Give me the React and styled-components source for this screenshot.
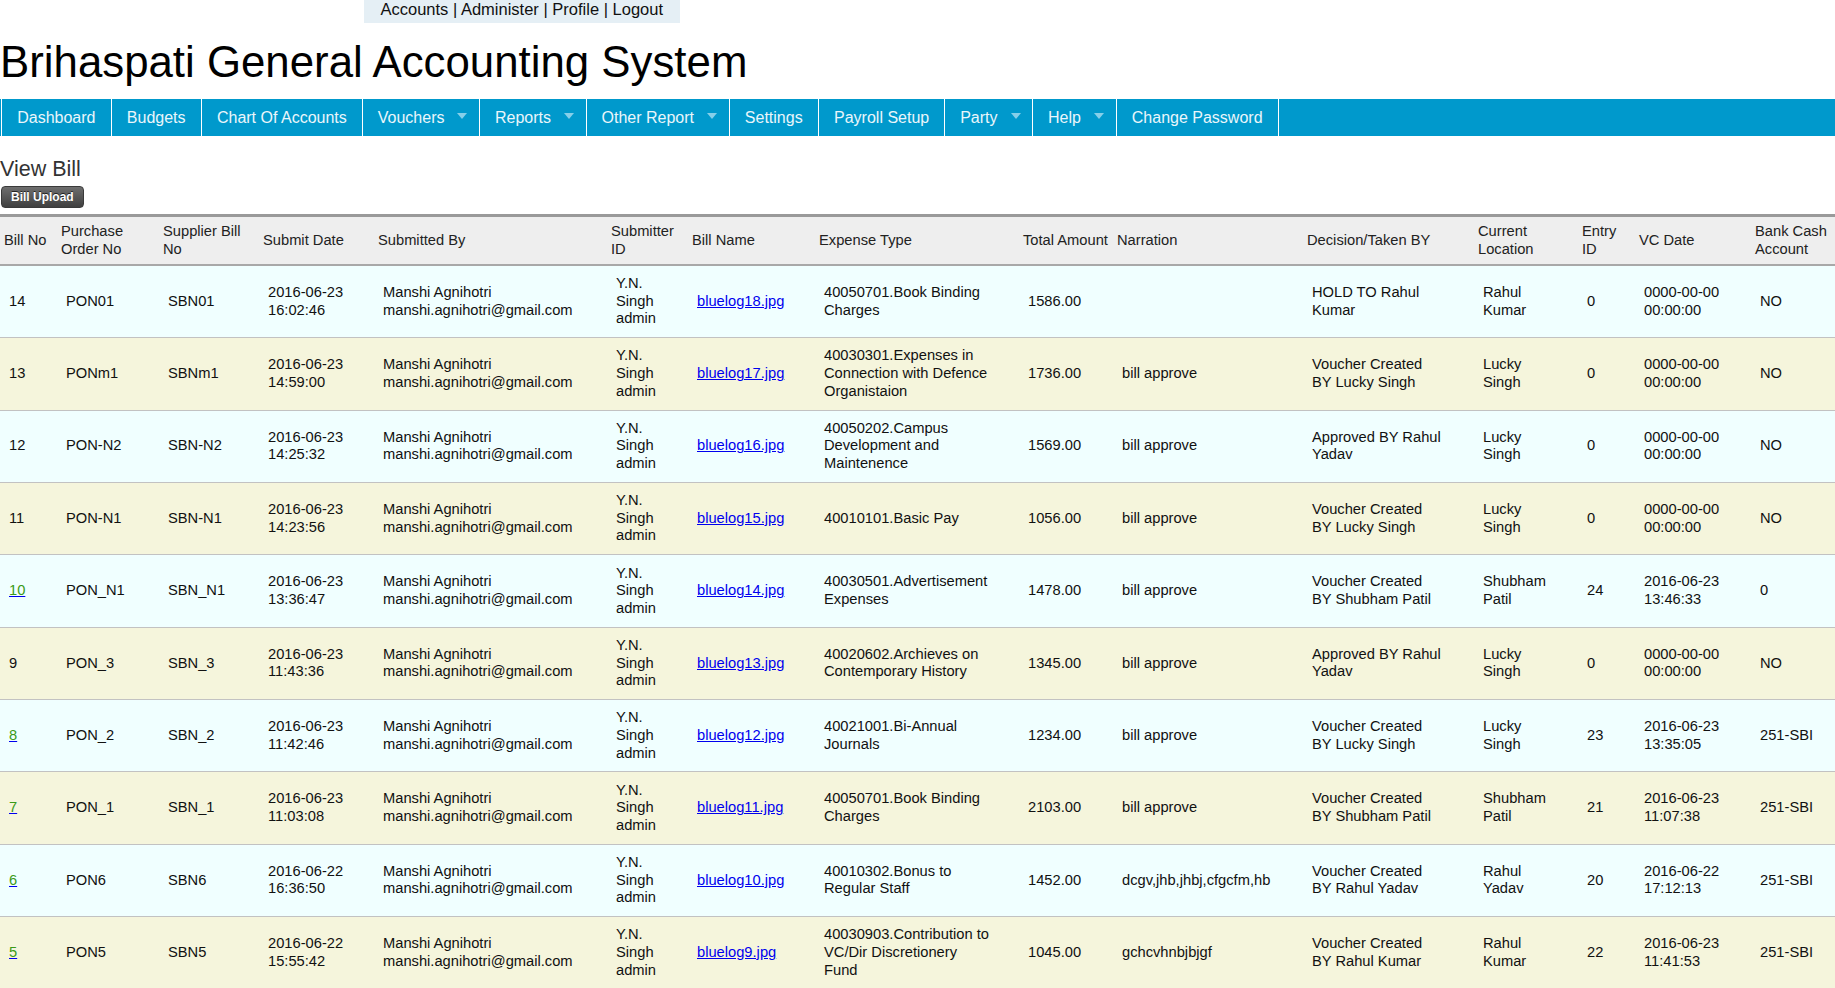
import React from "react";
import styled, { createGlobalStyle } from "styled-components";

const GlobalStyle = createGlobalStyle`
  html, body { margin: 0; padding: 0; background: #ffffff; }
  body {
    font-family: "Liberation Sans", Arial, Helvetica, sans-serif;
    color: #000;
    overflow: hidden;
  }
`;

const Page = styled.div`
  width: 1835px;
  overflow: hidden;
`;

const TopLinks = styled.div`
  margin-left: 364px;
  width: fit-content;
  background: #e5eff5;
  font-size: 16.5px;
  line-height: 19px;
  padding: 0 16.5px 4.4px;
  color: #111;
`;

const TopLink = styled.a`
  color: #111;
  text-decoration: none;
`;

const Title = styled.h1`
  margin: 13.2px 0 0;
  font-size: 43.8px;
  line-height: 50px;
  font-weight: normal;
  color: #000;
`;

const NavBar = styled.nav`
  margin-top: 12.3px;
  height: 37.5px;
  background: #0099cc;
  display: flex;
  padding-left: 1px;
`;

const NavItem = styled.div`
  display: flex;
  align-items: center;
  gap: 13px;
  height: 100%;
  padding: 0 ${(p) => (p.$dropdown ? "11.7px" : "15.2px")} 0 ${(p) => (p.$dropdown ? "14.8px" : "15.2px")};
  border-right: 1px solid #ffffff;
  border-left: ${(p) => (p.$first ? "1px solid #ffffff" : "none")};
  color: #eaf6fb;
  font-size: 16px;
  white-space: nowrap;
  cursor: pointer;
`;

const Arrow = styled.span`
  width: 0;
  height: 0;
  border-left: 5px solid transparent;
  border-right: 5px solid transparent;
  border-top: 6px solid #86cfe9;
  margin-top: -3px;
`;

const Heading = styled.h2`
  margin: 20.6px 0 0;
  font-size: 21.5px;
  line-height: 24px;
  font-weight: normal;
  color: #333;
`;

const UploadButton = styled.button`
  display: block;
  box-sizing: border-box;
  margin: 5.2px 0 0 1px;
  height: 22px;
  padding: 0 9px;
  border: 1px solid #3a3a3a;
  border-radius: 4px;
  background: linear-gradient(#6e6e6e, #3f3f3f);
  color: #fff;
  font-family: "Liberation Sans", Arial, sans-serif;
  font-weight: bold;
  font-size: 12px;
  text-shadow: 0 -1px 0 #222;
  cursor: pointer;
`;

const Table = styled.table`
  margin-top: 5.8px;
  border-collapse: separate;
  border-spacing: 0;
  table-layout: fixed;
  width: 1871px;
  font-size: 14.7px;
`;

const Th = styled.th`
  background: #eeeeee;
  border-top: 3px solid #9a9a9a;
  border-bottom: 2px solid #a8a8a8;
  padding: 6.4px 1px 5.6px 4px;
  line-height: 17.5px;
  text-align: left;
  vertical-align: middle;
  font-weight: normal;
  color: #222;
  white-space: nowrap;
`;

const Row = styled.tr`
  background: ${(p) => (p.$odd ? "#f0ffff" : "#f5f5dc")};
`;

const Td = styled.td`
  padding: 9.2px 10px 9.2px 9px;
  line-height: 17.65px;
  border-bottom: 1px solid #c2c2c2;
  vertical-align: middle;
  text-align: left;
  white-space: nowrap;
  color: #111;
`;

const BillLink = styled.a`
  color: #0000ee;
  text-decoration: underline;
`;

const NumLink = styled.a`
  color: #3a9a18;
  text-decoration: underline;
  text-decoration-color: #0000ee;
`;

const colWidths = [57, 102, 100, 115, 233, 81, 127, 204, 94, 190, 171, 104, 57, 116, 120];

const headers = [
  ["Bill No"],
  ["Purchase", "Order No"],
  ["Supplier Bill", "No"],
  ["Submit Date"],
  ["Submitted By"],
  ["Submitter", "ID"],
  ["Bill Name"],
  ["Expense Type"],
  ["Total Amount"],
  ["Narration"],
  ["Decision/Taken BY"],
  ["Current", "Location"],
  ["Entry", "ID"],
  ["VC Date"],
  ["Bank Cash", "Account"],
];

const rows = [
  { no: "14", link: false, po: "PON01", sb: "SBN01", date: ["2016-06-23", "16:02:46"], file: "bluelog18.jpg", exp: ["40050701.Book Binding", "Charges"], amt: "1586.00", nar: "", dec: ["HOLD TO Rahul", "Kumar"], loc: ["Rahul", "Kumar"], entry: "0", vc: ["0000-00-00", "00:00:00"], bank: "NO" },
  { no: "13", link: false, po: "PONm1", sb: "SBNm1", date: ["2016-06-23", "14:59:00"], file: "bluelog17.jpg", exp: ["40030301.Expenses in", "Connection with Defence", "Organistaion"], amt: "1736.00", nar: "bill approve", dec: ["Voucher Created", "BY Lucky Singh"], loc: ["Lucky", "Singh"], entry: "0", vc: ["0000-00-00", "00:00:00"], bank: "NO" },
  { no: "12", link: false, po: "PON-N2", sb: "SBN-N2", date: ["2016-06-23", "14:25:32"], file: "bluelog16.jpg", exp: ["40050202.Campus", "Development and", "Maintenence"], amt: "1569.00", nar: "bill approve", dec: ["Approved BY Rahul", "Yadav"], loc: ["Lucky", "Singh"], entry: "0", vc: ["0000-00-00", "00:00:00"], bank: "NO" },
  { no: "11", link: false, po: "PON-N1", sb: "SBN-N1", date: ["2016-06-23", "14:23:56"], file: "bluelog15.jpg", exp: ["40010101.Basic Pay"], amt: "1056.00", nar: "bill approve", dec: ["Voucher Created", "BY Lucky Singh"], loc: ["Lucky", "Singh"], entry: "0", vc: ["0000-00-00", "00:00:00"], bank: "NO" },
  { no: "10", link: true, po: "PON_N1", sb: "SBN_N1", date: ["2016-06-23", "13:36:47"], file: "bluelog14.jpg", exp: ["40030501.Advertisement", "Expenses"], amt: "1478.00", nar: "bill approve", dec: ["Voucher Created", "BY Shubham Patil"], loc: ["Shubham", "Patil"], entry: "24", vc: ["2016-06-23", "13:46:33"], bank: "0" },
  { no: "9", link: false, po: "PON_3", sb: "SBN_3", date: ["2016-06-23", "11:43:36"], file: "bluelog13.jpg", exp: ["40020602.Archieves on", "Contemporary History"], amt: "1345.00", nar: "bill approve", dec: ["Approved BY Rahul", "Yadav"], loc: ["Lucky", "Singh"], entry: "0", vc: ["0000-00-00", "00:00:00"], bank: "NO" },
  { no: "8", link: true, po: "PON_2", sb: "SBN_2", date: ["2016-06-23", "11:42:46"], file: "bluelog12.jpg", exp: ["40021001.Bi-Annual", "Journals"], amt: "1234.00", nar: "bill approve", dec: ["Voucher Created", "BY Lucky Singh"], loc: ["Lucky", "Singh"], entry: "23", vc: ["2016-06-23", "13:35:05"], bank: "251-SBI" },
  { no: "7", link: true, po: "PON_1", sb: "SBN_1", date: ["2016-06-23", "11:03:08"], file: "bluelog11.jpg", exp: ["40050701.Book Binding", "Charges"], amt: "2103.00", nar: "bill approve", dec: ["Voucher Created", "BY Shubham Patil"], loc: ["Shubham", "Patil"], entry: "21", vc: ["2016-06-23", "11:07:38"], bank: "251-SBI" },
  { no: "6", link: true, po: "PON6", sb: "SBN6", date: ["2016-06-22", "16:36:50"], file: "bluelog10.jpg", exp: ["40010302.Bonus to", "Regular Staff"], amt: "1452.00", nar: "dcgv,jhb,jhbj,cfgcfm,hb", dec: ["Voucher Created", "BY Rahul Yadav"], loc: ["Rahul", "Yadav"], entry: "20", vc: ["2016-06-22", "17:12:13"], bank: "251-SBI" },
  { no: "5", link: true, po: "PON5", sb: "SBN5", date: ["2016-06-22", "15:55:42"], file: "bluelog9.jpg", exp: ["40030903.Contribution to", "VC/Dir Discretionery", "Fund"], amt: "1045.00", nar: "gchcvhnbjbjgf", dec: ["Voucher Created", "BY Rahul Kumar"], loc: ["Rahul", "Kumar"], entry: "22", vc: ["2016-06-23", "11:41:53"], bank: "251-SBI" },
];

const Lines = ({ items }) =>
  items.map((t, i) => (
    <React.Fragment key={i}>
      {i > 0 && <br />}
      {t}
    </React.Fragment>
  ));

const navItems = [
  { label: "Dashboard" },
  { label: "Budgets" },
  { label: "Chart Of Accounts" },
  { label: "Vouchers", dd: true },
  { label: "Reports", dd: true },
  { label: "Other Report", dd: true },
  { label: "Settings" },
  { label: "Payroll Setup" },
  { label: "Party", dd: true },
  { label: "Help", dd: true },
  { label: "Change Password" },
];

export default function App() {
  return (
    <Page>
      <GlobalStyle />
      <TopLinks>
        <TopLink href="#">Accounts</TopLink> | <TopLink href="#">Administer</TopLink> |{" "}
        <TopLink href="#">Profile</TopLink> | <TopLink href="#">Logout</TopLink>
      </TopLinks>
      <Title>Brihaspati General Accounting System</Title>
      <NavBar>
        {navItems.map((n, i) => (
          <NavItem key={n.label} $dropdown={n.dd} $first={i === 0}>
            {n.label}
            {n.dd && <Arrow />}
          </NavItem>
        ))}
      </NavBar>
      <Heading>View Bill</Heading>
      <UploadButton>Bill Upload</UploadButton>
      <Table>
        <colgroup>
          {colWidths.map((w, i) => (
            <col key={i} style={{ width: w }} />
          ))}
        </colgroup>
        <thead>
          <tr>
            {headers.map((h, i) => (
              <Th key={i}>
                <Lines items={h} />
              </Th>
            ))}
          </tr>
        </thead>
        <tbody>
          {rows.map((r, i) => (
            <Row key={r.no} $odd={i % 2 === 0}>
              <Td>{r.link ? <NumLink href="#">{r.no}</NumLink> : r.no}</Td>
              <Td>{r.po}</Td>
              <Td>{r.sb}</Td>
              <Td>
                <Lines items={r.date} />
              </Td>
              <Td>
                Manshi Agnihotri
                <br />
                manshi.agnihotri@gmail.com
              </Td>
              <Td>
                Y.N.
                <br />
                Singh
                <br />
                admin
              </Td>
              <Td>
                <BillLink href="#">{r.file}</BillLink>
              </Td>
              <Td>
                <Lines items={r.exp} />
              </Td>
              <Td>{r.amt}</Td>
              <Td>{r.nar}</Td>
              <Td>
                <Lines items={r.dec} />
              </Td>
              <Td>
                <Lines items={r.loc} />
              </Td>
              <Td>{r.entry}</Td>
              <Td>
                <Lines items={r.vc} />
              </Td>
              <Td>{r.bank}</Td>
            </Row>
          ))}
        </tbody>
      </Table>
    </Page>
  );
}
